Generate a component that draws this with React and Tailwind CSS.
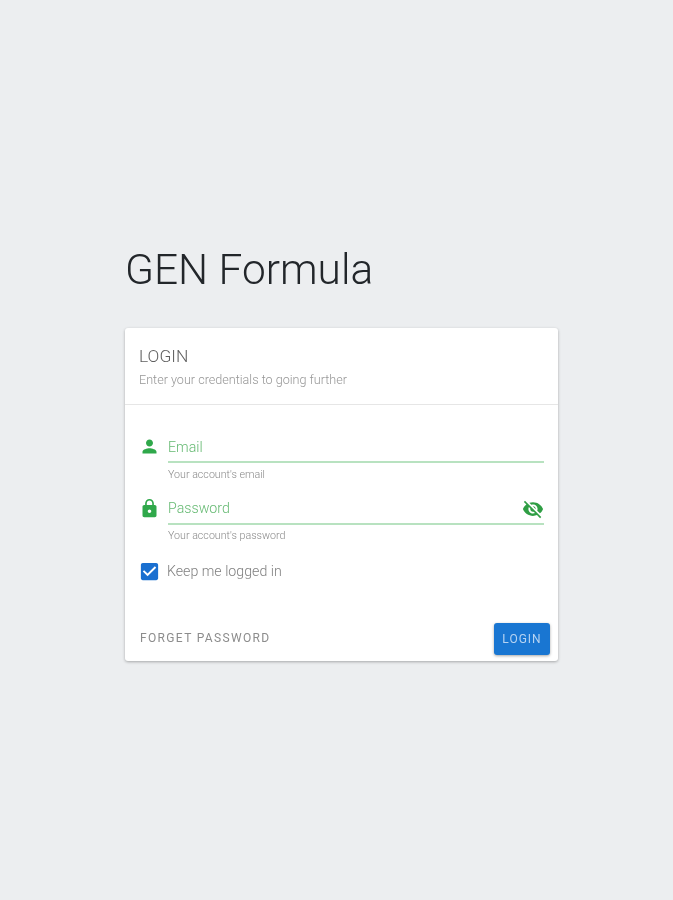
import React from "react";

const personPath = "M12 12c2.21 0 4-1.79 4-4s-1.79-4-4-4-4 1.79-4 4 1.79 4 4 4zm0 2c-2.67 0-8 1.34-8 4v2h16v-2c0-2.66-5.33-4-8-4z";
const lockPath = "M18 8h-1V6c0-2.76-2.24-5-5-5S7 3.24 7 6v2H6c-1.1 0-2 .9-2 2v10c0 1.1.9 2 2 2h12c1.1 0 2-.9 2-2V10c0-1.1-.9-2-2-2zm-6 9c-1.1 0-2-.9-2-2s.9-2 2-2 2 .9 2 2-.9 2-2 2zm3.1-9H8.9V6c0-1.71 1.39-3.1 3.1-3.1 1.71 0 3.1 1.39 3.1 3.1v2z";
const eyeOffPath = "M12 7c2.76 0 5 2.24 5 5 0 .65-.13 1.26-.36 1.83l2.92 2.92c1.51-1.26 2.7-2.89 3.43-4.75-1.73-4.39-6-7.5-11-7.5-1.4 0-2.74.25-3.98.7l2.16 2.16C10.74 7.13 11.35 7 12 7zM2 4.27l2.28 2.28.46.46C3.08 8.3 1.78 10.02 1 12c1.73 4.39 6 7.5 11 7.5 1.55 0 3.03-.3 4.38-.84l.42.42L19.73 22 21 20.73 3.27 3 2 4.27zM7.53 9.8l1.55 1.55c-.05.21-.08.43-.08.65 0 1.66 1.34 3 3 3 .22 0 .44-.03.65-.08l1.55 1.55c-.67.33-1.41.53-2.2.53-2.76 0-5-2.24-5-5 0-.79.2-1.53.53-2.2zm4.31-.78l3.15 3.15.02-.16c0-1.66-1.34-3-3-3l-.17.01z";
const checkPath = "M19 3H5c-1.11 0-2 .9-2 2v14c0 1.1.89 2 2 2h14c1.11 0 2-.9 2-2V5c0-1.1-.89-2-2-2zm-9 14l-5-5 1.41-1.41L10 14.17l7.59-7.59L19 8l-9 9z";

function Icon({ d, className }) {
  return (
    <svg viewBox="0 0 24 24" fill="currentColor" className={className}>
      <path d={d} />
    </svg>
  );
}

function Field({ icon, label, hint, trailing }) {
  return (
    <div className="flex">
      <div className="w-[29px] shrink-0 pt-[8px]">
        <Icon d={icon} className="w-[21px] h-[21px] text-[#2fa84a]" />
      </div>
      <div className="flex-1">
        <div className="h-[35px] pt-[6px] flex items-center justify-between border-b-2 border-[#b8e2c0]">
          <span className="text-[14.2px] font-light text-[#66ba73]">{label}</span>
          {trailing}
        </div>
        <div className="mt-[4.5px] h-[22px] text-[10.7px] leading-[13px] font-light text-[#8a8a8a]">{hint}</div>
      </div>
    </div>
  );
}

export default function App() {
  return (
    <div className="min-h-[900px] bg-[#eceef0] pt-[245px] pl-[125px] font-['Roboto',sans-serif] blur-[0.5px]">
      <div className="w-[433px]">
        <h1 className="text-[42.4px] leading-[50px] font-light text-[#22262a]">GEN Formula</h1>

        <div className="mt-[33px] bg-white rounded-[3px] shadow-[0_1px_3px_rgba(0,0,0,0.3)]">
          <div className="h-[77px] px-[14px] pt-[18px] border-b border-[#e6e6e6]">
            <div className="text-[17.4px] leading-[20px] font-light text-[#5f5f5f]">LOGIN</div>
            <div className="mt-[6px] text-[12.6px] leading-[16px] font-light text-[#969696]">
              Enter your credentials to going further
            </div>
          </div>

          <div className="px-[14px] pt-[23px]">
            <Field icon={personPath} label="Email" hint="Your account's email" />
            <Field
              icon={lockPath}
              label="Password"
              hint="Your account's password"
              trailing={<Icon d={eyeOffPath} className="w-[22px] h-[22px] text-[#2f9e44]" />}
            />
            <div className="mt-[9px] flex items-center h-[24px]">
              <Icon d={checkPath} className="w-[23px] h-[23px] -ml-[1px] -mt-[1px] text-[#1a6fd0]" />
              <span className="ml-[6px] text-[14.2px] font-light text-[#808080]">Keep me logged in</span>
            </div>
          </div>

          <div className="mt-[39px] pl-[15px] pr-[8px] pb-[6px] flex items-center justify-between">
            <span className="mb-[3px] text-[12px] font-normal tracking-[1.35px] text-[#8c8c8c]">FORGET PASSWORD</span>
            <div className="w-[56px] h-[32px] pb-[1px] flex items-center justify-center bg-[#1976d2] rounded-[3px] shadow-[0_1px_3px_rgba(0,0,0,0.35)] text-[12px] tracking-[1px] text-[#b6d3f2]">
              LOGIN
            </div>
          </div>
        </div>
      </div>
    </div>
  );
}
